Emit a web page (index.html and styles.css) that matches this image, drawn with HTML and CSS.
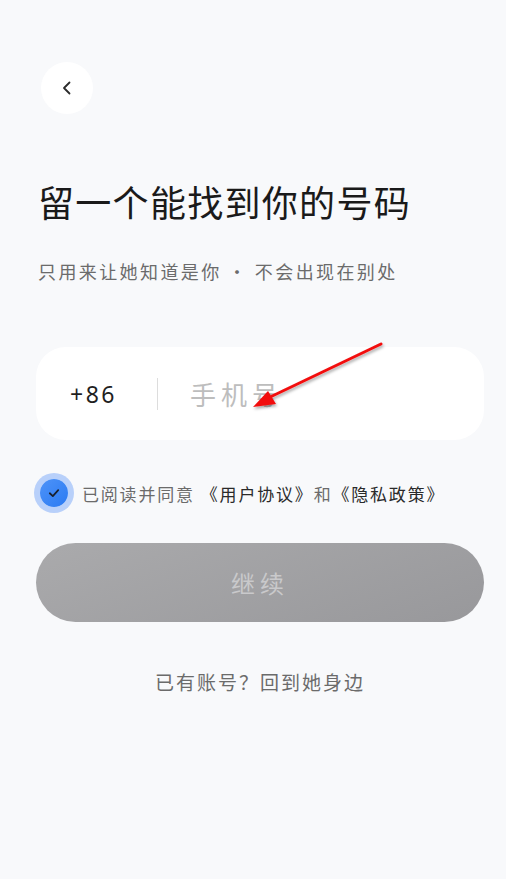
FILE: index.html
```html
<!DOCTYPE html>
<html lang="zh-CN">
<head>
    <meta charset="UTF-8">
    <title>留一个能找到你的号码</title>
    <link rel="stylesheet" href="styles.css">
</head>
<body>
    <div class="page">
        <button class="back-btn" aria-label="返回">
            <svg width="16" height="16" viewBox="0 0 16 16">
                <path d="M10.5 2.5 L5 8 L10.5 13.5" fill="none" stroke="#2b2b2b" stroke-width="1.8" stroke-linecap="round" stroke-linejoin="round"/>
            </svg>
        </button>

        <h1 class="title">留一个能找到你的号码</h1>
        <p class="subtitle">只用来让她知道是你 · 不会出现在别处</p>

        <div class="phone-card">
            <span class="area-code">+86</span>
            <span class="divider"></span>
            <input type="tel" class="phone-input" placeholder="手机号">
        </div>

        <label class="agree-row">
            <span class="check">
                <svg width="14" height="14" viewBox="0 0 12 12">
                    <path d="M2.4 6.2 L5 8.6 L9.6 3.6" fill="none" stroke="#18202e" stroke-width="1.5" stroke-linecap="round" stroke-linejoin="round"/>
                </svg>
            </span>
            <span class="agree-text">已阅读并同意</span>
            <span class="agree-link">《用户协议》</span>
            <span class="agree-text">和</span>
            <span class="agree-link">《隐私政策》</span>
        </label>

        <button class="continue-btn" disabled>继续</button>

        <p class="login-link">已有账号？回到她身边</p>
    </div>

    <!-- annotatie pijl -->
    <svg class="arrow" width="506" height="879" viewBox="0 0 506 879">
        <defs>
            <filter id="shadow" x="-20%" y="-20%" width="140%" height="140%">
                <feDropShadow dx="1" dy="2" stdDeviation="1.5" flood-color="#000" flood-opacity="0.35"/>
            </filter>
        </defs>
        <g filter="url(#shadow)">
            <line x1="381" y1="344" x2="266" y2="399" stroke="#f20f0f" stroke-width="3" stroke-linecap="round"/>
            <polygon points="253,407 268,391 276,404" fill="#f20f0f"/>
        </g>
    </svg>
</body>
</html>
```

FILE: styles.css
```css
body {
    margin: 0;
    background-color: #f8f9fb;
    font-family: "Noto Sans CJK SC", "Noto Sans", sans-serif;
}
.page {
    padding: 62px 22px 0 36px;
    min-height: 817px;
}
.back-btn {
    display: flex;
    align-items: center;
    justify-content: center;
    width: 52px;
    height: 52px;
    margin-left: 5px;
    padding: 0;
    border: none;
    border-radius: 50%;
    background-color: #ffffff;
    cursor: pointer;
}
.title {
    margin: 62px 0 0 2px;
    font-size: 36px;
    font-weight: 400;
    line-height: 50px;
    letter-spacing: 1.3px;
    color: #1a1a1a;
}
.subtitle {
    margin: 33px 0 0 2px;
    font-size: 18px;
    line-height: 24px;
    letter-spacing: 2.4px;
    color: #6b6b6b;
}
.phone-card {
    display: flex;
    align-items: center;
    height: 93px;
    margin-top: 64px;
    padding: 0 34px;
    background-color: #ffffff;
    border-radius: 30px;
}
.area-code {
    font-family: "Noto Sans", sans-serif;
    font-size: 23px;
    letter-spacing: 2.5px;
    color: #1f1f1f;
}
.divider {
    width: 1px;
    height: 32px;
    margin: 0 32px 0 40px;
    background-color: #dddddd;
}
.phone-input {
    flex: 1;
    min-width: 0;
    border: none;
    outline: none;
    background: transparent;
    font-family: inherit;
    font-size: 26px;
    letter-spacing: 5px;
    color: #1f1f1f;
    padding: 0;
}
.phone-input::placeholder {
    color: #bdbdbd;
}
.agree-row {
    display: flex;
    align-items: center;
    margin-top: 39px;
    font-size: 17px;
    letter-spacing: 1.8px;
}
.check {
    display: flex;
    align-items: center;
    justify-content: center;
    width: 28px;
    height: 28px;
    margin: 0 14px 0 4px;
    border-radius: 50%;
    background: linear-gradient(135deg, #4e93f8, #2a7af3);
    box-shadow: 0 0 0 6px #b8d0fa;
}
.agree-text {
    color: #6b6b6b;
}
.agree-link {
    color: #2a2a2a;
}
.agree-text + .agree-link {
    margin-left: 6px;
}
.agree-link + .agree-text + .agree-link {
    margin-left: 0;
}
.continue-btn {
    display: block;
    width: 100%;
    height: 79px;
    margin-top: 36px;
    border: none;
    border-radius: 40px;
    background: linear-gradient(160deg, #aaaaac, #98989b);
    font-family: inherit;
    font-size: 24px;
    letter-spacing: 5px;
    color: #c9c9cb;
}
.login-link {
    margin: 46px 0 0;
    text-align: center;
    font-size: 19px;
    letter-spacing: 2px;
    color: #6b6b6b;
}
.arrow {
    position: absolute;
    top: 0;
    left: 0;
    pointer-events: none;
}
```
